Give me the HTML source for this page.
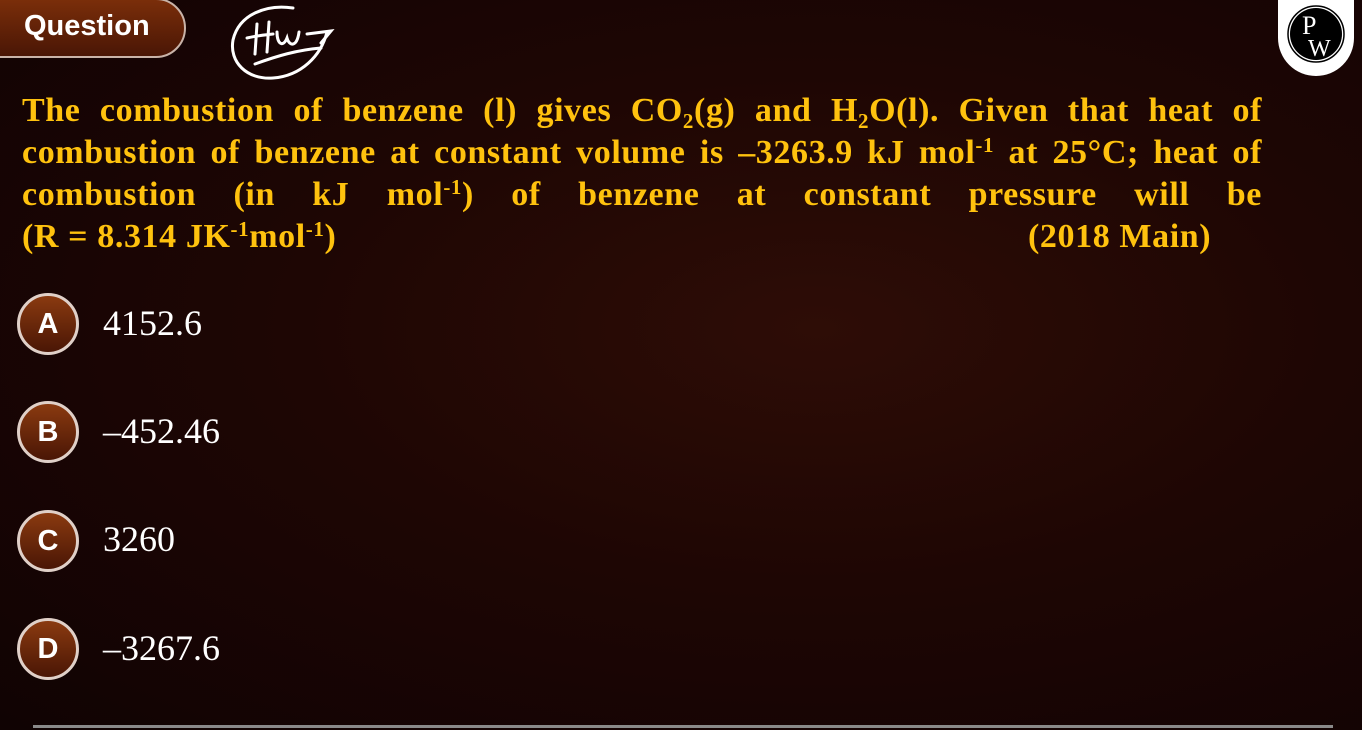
<!DOCTYPE html>
<html><head><meta charset="utf-8"><style>
body{margin:0;width:1362px;height:730px;overflow:hidden;background:radial-gradient(ellipse at 60% 45%,#2e0d06 0%,#1e0604 45%,#100303 100%);font-family:"Liberation Serif",serif;position:relative}
.q{position:absolute;left:-20px;top:-2px;width:206px;height:60px;border:2px solid #c9b3a8;border-radius:0 30px 30px 0;background:linear-gradient(#7a2e0a,#4a1605);box-sizing:border-box}
.q span{position:absolute;left:42px;top:10px;color:#fff;font:bold 29px "Liberation Sans",sans-serif}
.txt{position:absolute;left:22px;width:1240px;color:#ffc20e;font-weight:bold;font-size:34px;line-height:42px;letter-spacing:0.6px}
.l{text-align:justify;text-align-last:justify;white-space:nowrap;height:42px}
sup{font-size:21px;vertical-align:11px;line-height:0}
sub{font-size:21px;vertical-align:-7px;line-height:0}
.opt{position:absolute;left:17px;width:62px;height:62px;border-radius:50%;border:3px solid #e0d0c8;box-sizing:border-box;background:linear-gradient(#8a3a10,#4a1605);color:#fff;font:bold 29px "Liberation Sans",sans-serif;text-align:center;line-height:56px}
.ov{position:absolute;left:103px;color:#fff;font-size:36px}
.bar{position:absolute;left:33px;top:725px;width:1300px;height:3px;background:#8a8a8a}
.pw{position:absolute;left:1278px;top:-10px;width:76px;height:86px;background:#fff;border-radius:0 0 38px 38px}
</style></head><body>
<div class="q"><span>Question</span></div>
<svg style="position:absolute;left:225px;top:2px" width="115" height="82" viewBox="0 0 115 82" fill="none" stroke="#fff" stroke-width="3" stroke-linecap="round">
<path d="M68 6C42 2 14 12 8 38c-4 22 14 40 40 38 28-2 48-22 54-46"/>
<path d="M32 22l-2 30M22 36c8-2 16-3 26-4M44 20l-2 30"/>
<path d="M52 30c0 12 6 16 10 6 2 8 10 10 12-6"/>
<path d="M82 32l24-3-10 12M30 62c22-8 42-14 66-16"/>
</svg>
<div class="pw"><svg style="position:absolute;left:8px;top:14px" width="60" height="60" viewBox="0 0 60 60"><circle cx="30" cy="30" r="26" fill="#000"/><circle cx="30" cy="30" r="28" fill="none" stroke="#000" stroke-width="1.5"/><text x="16" y="30" fill="#fff" font-family="Liberation Serif" font-size="26">P</text><text x="22" y="52" fill="#fff" font-family="Liberation Serif" font-size="24">W</text></svg></div>
<div class="txt" style="top:90px">
<div class="l">The combustion of benzene (l) gives CO<sub>2</sub>(g) and H<sub>2</sub>O(l). Given that heat of</div>
<div class="l">combustion of benzene at constant volume is –3263.9 kJ mol<sup>-1</sup> at 25°C; heat of</div>
<div class="l">combustion (in kJ mol<sup>-1</sup>) of benzene at constant pressure will be</div>
<div style="position:relative;height:42px">(R = 8.314 JK<sup>-1</sup>mol<sup>-1</sup>)<span style="position:absolute;left:1006px">(2018 Main)</span></div>
</div>
<div class="opt" style="top:293px">A</div><div class="ov" style="top:302px">4152.6</div>
<div class="opt" style="top:401px">B</div><div class="ov" style="top:410px">–452.46</div>
<div class="opt" style="top:510px">C</div><div class="ov" style="top:518px">3260</div>
<div class="opt" style="top:618px">D</div><div class="ov" style="top:627px">–3267.6</div>
<div class="bar"></div>
</body></html>
